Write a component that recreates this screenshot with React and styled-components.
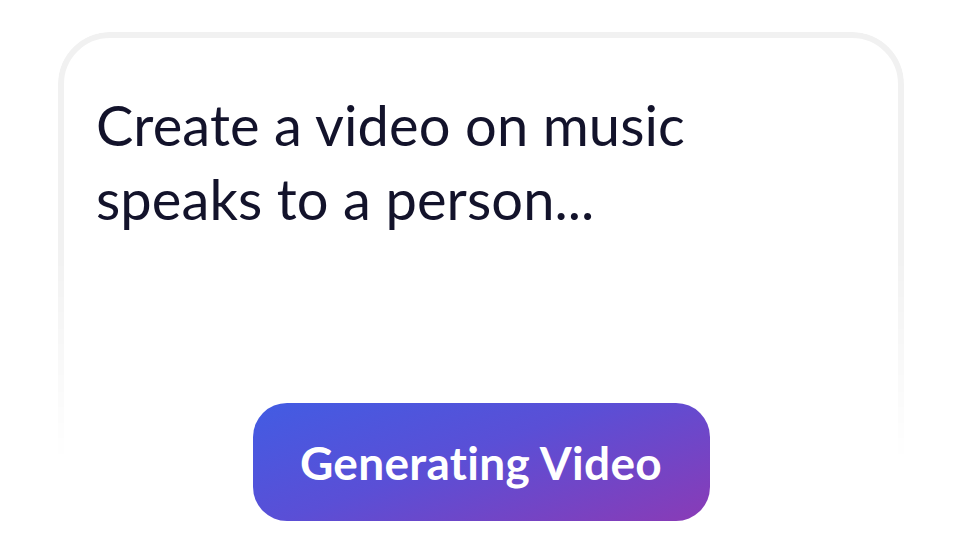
import React from "react";
import styled, { createGlobalStyle } from "styled-components";

const GlobalStyle = createGlobalStyle`
  html, body {
    margin: 0;
    padding: 0;
    background: #ffffff;
    overflow: hidden;
  }
  body {
    font-family: "Lato", "Noto Sans", sans-serif;
  }
`;

const Page = styled.div`
  width: 964px;
  height: 542px;
  padding: 32px 0 0 58px;
  box-sizing: border-box;
  overflow: hidden;
`;

const Card = styled.div`
  position: relative;
  width: 846px;
  height: 560px;
  box-sizing: border-box;
  padding: 56px 38px 0;
  border-radius: 52px;
  display: flex;
  flex-direction: column;

  &::before {
    content: "";
    position: absolute;
    inset: 0;
    border: 6px solid #f1f1f1;
    border-radius: 52px;
    pointer-events: none;
    -webkit-mask-image: linear-gradient(to bottom, #000 0, #000 210px, transparent 430px);
    mask-image: linear-gradient(to bottom, #000 0, #000 210px, transparent 430px);
  }
`;

const Prompt = styled.p`
  margin: 0;
  font-size: 56px;
  line-height: 74px;
  font-weight: 400;
  color: #13132b;
  letter-spacing: 0.1px;
`;

const Actions = styled.div`
  display: flex;
  justify-content: center;
  margin-top: 167px;
`;

const GenerateButton = styled.button`
  width: 457px;
  height: 118px;
  border: none;
  border-radius: 34px;
  background: linear-gradient(160deg, #425ce3 0%, #5a4fd6 45%, #8a3bb6 100%);
  color: #ffffff;
  font-family: "Lato", "Noto Sans", sans-serif;
  font-size: 46px;
  font-weight: 700;
  font-variant-ligatures: none;
  letter-spacing: 0.3px;
  cursor: pointer;
`;

export default function App() {
  return (
    <Page>
      <GlobalStyle />
      <Card>
        <Prompt>
          Create a video on music
          <br />
          speaks to a person...
        </Prompt>
        <Actions>
          <GenerateButton>Generating Video</GenerateButton>
        </Actions>
      </Card>
    </Page>
  );
}
